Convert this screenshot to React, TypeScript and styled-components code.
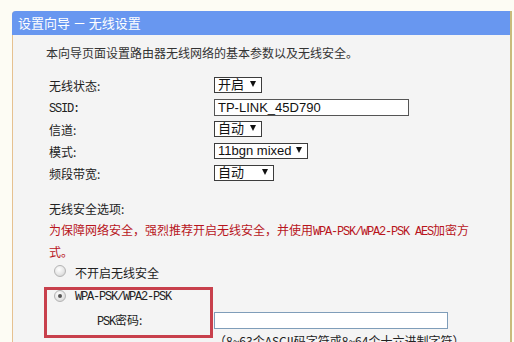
import styled, { createGlobalStyle } from "styled-components";

const GlobalStyle = createGlobalStyle`
  html, body {
    margin: 0;
    padding: 0;
    background: #fdfcf4;
  }
  body {
    font-family: "Noto Sans CJK SC", "Liberation Sans", sans-serif;
    font-size: 12px;
    color: #2a2a2a;
    overflow: hidden;
  }
`;

interface Row {
  label: string;
  mono?: boolean;
  control: "select" | "input";
  value: string;
  width: number;
}

const rows: Row[] = [
  { label: "无线状态:", control: "select", value: "开启", width: 48 },
  { label: "SSID:", mono: true, control: "input", value: "TP-LINK_45D790", width: 195 },
  { label: "信道:", control: "select", value: "自动", width: 48 },
  { label: "模式:", control: "select", value: "11bgn mixed", width: 94 },
  { label: "频段带宽:", control: "select", value: "自动", width: 60 },
];

export default function App() {
  return (
    <>
      <GlobalStyle />
      <Page>
        <Panel>
          <Header>设置向导 － 无线设置</Header>
          <Body>
            <Intro>本向导页面设置路由器无线网络的基本参数以及无线安全。</Intro>

            <FormGrid>
              {rows.map((row) => (
                <FormRow key={row.label}>
                  <Label>{row.mono ? <Mono>{row.label}</Mono> : row.label}</Label>
                  {row.control === "select" ? (
                    <Select $width={row.width}>
                      <span>{row.value}</span>
                      <Arrow />
                    </Select>
                  ) : (
                    <TextBox $width={row.width}>{row.value}</TextBox>
                  )}
                </FormRow>
              ))}
            </FormGrid>

            <Security>
              <SectionLabel>无线安全选项:</SectionLabel>
              <Warning>
                为保障网络安全，强烈推荐开启无线安全，并使用
                <Mono>WPA-PSK/WPA2-PSK AES</Mono>加密方式。
              </Warning>

              <Option>
                <Radio />
                <span>不开启无线安全</span>
              </Option>

              <Highlighted>
                <Option>
                  <Radio $checked />
                  <Mono>WPA-PSK/WPA2-PSK</Mono>
                </Option>
                <PskRow>
                  <PskLabel>
                    <Mono>PSK</Mono>密码:
                  </PskLabel>
                  <TextBox $width={234} $blue />
                </PskRow>
                <Hint>（8~63个ASCII码字符或8~64个十六进制字符）</Hint>
                <RedBox />
              </Highlighted>
            </Security>
          </Body>
        </Panel>
      </Page>
    </>
  );
}

const Page = styled.div`
  padding: 11px 2px 0 12px;
  height: 342px;
  box-sizing: border-box;
`;

const Panel = styled.div`
  width: 500px;
  height: 331px;
  display: flex;
  flex-direction: column;
  background: #f4f4f4;
  border-left: 1px solid #e6c190;
  border-right: 2px solid #c9bb7c;
  border-radius: 4px 0 0 0;
  box-sizing: border-box;
`;

const Header = styled.div`
  height: 24px;
  background: #6897f0;
  color: #ffffff;
  font-size: 13px;
  line-height: 24px;
  padding-left: 6px;
  border-radius: 4px 0 0 0;
  margin-left: -1px;
`;

const Body = styled.div`
  padding: 10px 0 0 33px;
`;

const Intro = styled.div`
  font-size: 12px;
  line-height: 16px;
  color: #333;
`;

const FormGrid = styled.div`
  display: flex;
  flex-direction: column;
  margin-top: 13px;
  padding-left: 3px;
`;

const FormRow = styled.div`
  display: grid;
  grid-template-columns: 165px auto;
  align-items: center;
  height: 22px;
`;

const Label = styled.div`
  font-size: 12px;
  color: #222;
`;

const Mono = styled.span`
  font-family: "Liberation Mono", monospace;
  font-size: 12px;
  letter-spacing: -1.2px;
  color: inherit;
`;

const Select = styled.div<{ $width: number }>`
  width: ${(p) => p.$width}px;
  height: 16px;
  box-sizing: border-box;
  border: 1px solid #3c3c3c;
  background: #ffffff;
  display: flex;
  align-items: center;
  justify-content: space-between;
  padding: 0 5px 0 3px;
  font-family: "Liberation Sans", "Noto Sans CJK SC", sans-serif;
  font-size: 13px;
  color: #111;
  line-height: 14px;
`;

const Arrow = styled.span`
  width: 0;
  height: 0;
  border-left: 3px solid transparent;
  border-right: 3px solid transparent;
  border-top: 6px solid #111;
  margin-bottom: 2px;
`;

const TextBox = styled.div<{ $width: number; $blue?: boolean }>`
  width: ${(p) => p.$width}px;
  height: 17px;
  box-sizing: border-box;
  border: 1px solid ${(p) => (p.$blue ? "#7f9db9" : "#555")};
  background: #ffffff;
  padding: 0 3px;
  font-family: "Liberation Sans", sans-serif;
  font-size: 13px;
  line-height: 15px;
  color: #111;
`;

const Security = styled.div`
  margin-top: 15px;
  padding-left: 3px;
  width: 425px;
`;

const SectionLabel = styled.div`
  line-height: 20px;
  color: #222;
`;

const Warning = styled.div`
  color: #b8141c;
  line-height: 20px;
  margin-top: 1px;
`;

const Option = styled.div`
  display: flex;
  align-items: center;
  height: 20px;
  gap: 9px;
  padding-left: 5px;
  color: #222;
`;

const Radio = styled.span<{ $checked?: boolean }>`
  width: 12px;
  height: 12px;
  border-radius: 50%;
  box-sizing: border-box;
  border: 1px solid #b4b4b4;
  background: radial-gradient(circle at 40% 35%, #ffffff 0%, #e6e6e6 55%, #c8c8c8 100%);
  display: flex;
  align-items: center;
  justify-content: center;
  margin-top: -3px;

  &::after {
    content: "";
    display: ${(p) => (p.$checked ? "block" : "none")};
    width: 4px;
    height: 4px;
    border-radius: 50%;
    background: #555;
  }
`;

const Highlighted = styled.div`
  position: relative;
  margin-top: 5px;
`;

const PskRow = styled.div`
  display: grid;
  grid-template-columns: 165px auto;
  align-items: center;
  height: 22px;
  margin-top: 2px;
`;

const PskLabel = styled.div`
  padding-left: 48px;
  color: #222;
`;

const Hint = styled.div`
  padding-left: 165px;
  margin-top: 1px;
  color: #222;
  white-space: nowrap;
`;

const RedBox = styled.div`
  position: absolute;
  left: -5px;
  top: 0;
  width: 169px;
  height: 51px;
  box-sizing: border-box;
  border: 3px solid #c8404c;
`;
